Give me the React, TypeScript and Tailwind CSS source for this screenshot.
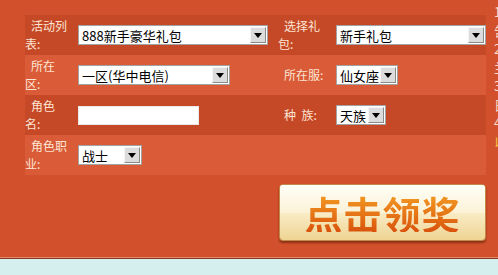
import React from "react";

//* fake windows-classic select *//
const Select = ({ value, width }: { value: string; width: string }) => (
  <div
    className={`ml-px flex h-[20px] items-stretch border border-[#a3a3a3] bg-white ${width}`}
  >
    <span className="flex flex-1 items-center overflow-hidden whitespace-nowrap pl-[3px] text-[13px] leading-none text-black">
      {value}
    </span>
    <span className="m-px flex w-[16px] items-center justify-center border border-t-[#f5f5f5] border-l-[#f5f5f5] border-r-[#8a8a8a] border-b-[#8a8a8a] bg-[#dcdcdc]">
      <svg width="8" height="5" viewBox="0 0 8 5">
        <path d="M0 0h8L4 5z" fill="#000" />
      </svg>
    </span>
  </div>
);

const Label = ({ lines, wide }: { lines: string[]; wide?: boolean }) => (
  <div
    className={`text-[12px] leading-[18px] text-[#fde5d4] ${wide ? "w-[57px]" : "w-[52px]"}`}
  >
    {lines.map((l, i) => (
      <div key={i} className={i === 0 ? "whitespace-pre pl-[6px]" : "whitespace-pre"}>
        {l}
      </div>
    ))}
  </div>
);

const rows = [
  {
    bg: "bg-[#c54827]",
    left: ["活动列", "表:"],
    field: <Select value="888新手豪华礼包" width="w-[190px]" />,
    right: ["选择礼", "包:"],
    field2: <Select value="新手礼包" width="w-[150px]" />,
  },
  {
    bg: "bg-[#d95b38]",
    left: ["所在", "区:"],
    field: <Select value="一区(华中电信)" width="w-[152px]" />,
    right: ["所在服:"],
    field2: <Select value="仙女座" width="w-[62px]" />,
  },
  {
    bg: "bg-[#c54827]",
    left: ["角色", "名:"],
    field: (
      <div className="ml-px h-[19px] w-[121px] border border-[#e9e9e9] bg-white" />
    ),
    right: ["种  族:"],
    field2: <Select value="天族" width="w-[50px]" />,
  },
  {
    bg: "bg-[#d95b38]",
    left: ["角色职", "业:"],
    field: <Select value="战士" width="w-[64px]" />,
    right: [],
    field2: null,
  },
];

const sideText = ["1", "告", "2", "兰", "3", "日", "4", "以"];

export default function App() {
  return (
    <div
      className="h-[275px] w-[498px] overflow-hidden bg-[#d5eeee]"
      style={{ fontFamily: '"Noto Sans CJK SC", "Liberation Sans", sans-serif' }}
    >
      <div className="flex h-[257px] bg-[#d2502b]">
        <div className="w-[486px] shrink-0 pl-[25px] pt-[15px]">
          {rows.map((r, i) => (
            <div key={i} className={`flex h-[40px] items-center ${r.bg}`}>
              <Label lines={r.left} />
              <div className="w-[201px]">{r.field}</div>
              <Label lines={r.right} wide />
              <div className="w-[151px]">{r.field2}</div>
            </div>
          ))}

          <div className="mt-[9px] flex justify-end">
            <button className="relative flex h-[57px] w-[207px] items-center justify-center overflow-hidden rounded-[4px] border border-[#c08a4a] bg-gradient-to-b from-[#fffdf3] via-[#f9ecc6] to-[#efd493] shadow-[0_2px_2px_rgba(90,30,10,0.6)]">
              <span className="absolute inset-x-0 top-0 h-1/2 bg-gradient-to-b from-[#fffef8] to-[#fbf2d6]" />
              <span className="relative bg-gradient-to-b from-[#f29a22] to-[#d9520c] bg-clip-text text-[38px] font-bold leading-none tracking-[1px] text-transparent">
                点击领奖
              </span>
            </button>
          </div>
        </div>

        <div className="ml-[8px] flex flex-col pt-[3px] text-[13px] leading-[18.5px] text-[#f6dcc9]">
          {sideText.map((t, i) => (
            <span key={i} className={i === sideText.length - 1 ? "text-[#f5c242]" : ""}>
              {t}
            </span>
          ))}
        </div>
      </div>
      <div className="h-px bg-[#e48a6c]" />
      <div className="h-px bg-[#8a3a24]" />
    </div>
  );
}
